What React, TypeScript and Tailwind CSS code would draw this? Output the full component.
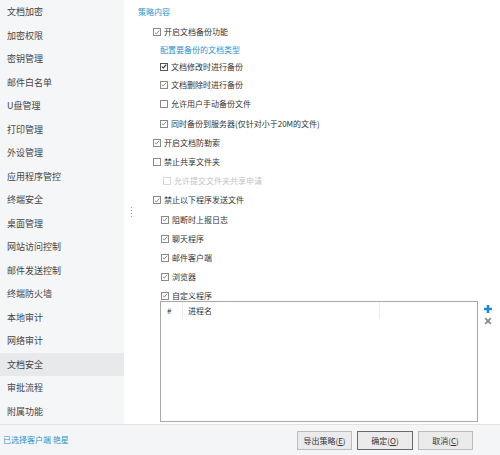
import React from "react";

const font = { fontFamily: '"Noto Sans CJK SC", "Noto Sans", sans-serif' };

const navItems = [
  "文档加密", "加密权限", "密钥管理", "邮件白名单", "U盘管理", "打印管理", "外设管理",
  "应用程序管控", "终端安全", "桌面管理", "网站访问控制", "邮件发送控制", "终端防火墙",
  "本地审计", "网络审计", "文档安全", "审批流程", "附属功能",
];

function Box({ checked, dark, disabled }: { checked?: boolean; dark?: boolean; disabled?: boolean }) {
  const border = disabled ? "border-[#d8d8d8]" : dark ? "border-[#555]" : "border-[#8a8a8a]";
  const stroke = dark ? "#333" : "#666";
  return (
    <span className={`inline-flex h-[8px] w-[8px] shrink-0 items-center justify-center border bg-white ${border}`}>
      {checked && (
        <svg width="7" height="7" viewBox="0 0 8 8">
          <path d="M1.2 4.2 L3.1 6 L6.9 1.6" fill="none" stroke={stroke} strokeWidth={dark ? 1.6 : 1} />
        </svg>
      )}
    </span>
  );
}

function Row({
  label, checked, dark, disabled, indent, h,
}: { label: string; checked?: boolean; dark?: boolean; disabled?: boolean; indent: string; h: string }) {
  return (
    <div className={`flex items-center ${h} ${indent}`}>
      <Box checked={checked} dark={dark} disabled={disabled} />
      <span className={`ml-[3px] text-[8px] leading-none ${disabled ? "text-[#c4c4c4]" : "text-[#333]"}`}>{label}</span>
    </div>
  );
}

export default function App() {
  return (
    <div className="flex h-[455px] w-[500px] flex-col overflow-hidden bg-white" style={font}>
      <div className="flex h-[424px]">
        <div className="flex w-[124px] flex-col bg-[#f5f6f8]">
          {navItems.map((n, i) => (
            <div
              key={n}
              className={`flex h-[23.5px] shrink-0 items-center pl-[7px] text-[9px] text-[#444] ${i === 15 ? "bg-[#e8e9eb]" : ""}`}
            >
              {n}
            </div>
          ))}
        </div>
        <div className="flex w-[12px] flex-col items-center justify-center">
          <div className="flex flex-col gap-[1.5px] pl-[3px]">
            {[0, 1, 2, 3].map((k) => (
              <span key={k} className="block h-[1.5px] w-[1.5px] bg-[#999]" />
            ))}
          </div>
        </div>
        <div className="relative flex flex-1 flex-col pt-[6px]">
          <div className="flex h-[12px] items-center pl-[2px] text-[8px] leading-none text-[#2b95d0]">策略内容</div>
          <div className="h-[8px]" />
          <Row label="开启文档备份功能" checked indent="pl-[17px]" h="h-[12px]" />
          <div className="h-[3px]" />
          <div className="flex h-[17px] items-center pl-[24px] text-[8px] leading-none text-[#2b95d0]">配置要备份的文档类型</div>
          <Row label="文档修改时进行备份" checked dark indent="pl-[24px]" h="h-[17px]" />
          <Row label="文档删除时进行备份" checked indent="pl-[24px]" h="h-[19px]" />
          <Row label="允许用户手动备份文件" indent="pl-[24px]" h="h-[20px]" />
          <Row label="同时备份到服务器(仅针对小于20M的文件)" checked indent="pl-[24px]" h="h-[19px]" />
          <Row label="开启文档防勒索" checked indent="pl-[17px]" h="h-[19px]" />
          <Row label="禁止共享文件夹" indent="pl-[17px]" h="h-[19px]" />
          <Row label="允许提交文件夹共享申请" disabled indent="pl-[27px]" h="h-[19px]" />
          <Row label="禁止以下程序发送文件" checked indent="pl-[17px]" h="h-[20px]" />
          <Row label="阻断时上报日志" checked indent="pl-[25px]" h="h-[19px]" />
          <Row label="聊天程序" checked indent="pl-[25px]" h="h-[19px]" />
          <Row label="邮件客户端" checked indent="pl-[25px]" h="h-[19px]" />
          <Row label="浏览器" checked indent="pl-[25px]" h="h-[19px]" />
          <Row label="自定义程序" checked indent="pl-[25px]" h="h-[19px]" />
          <div className="flex flex-1 pb-[1px] pl-[24px]">
            <div className="mt-[-4px] flex h-[121px] w-[318px] flex-col border border-[#a8a8a8] bg-white">
              <div className="flex h-[17px] items-center text-[8px] text-[#333]">
                <div className="flex h-full w-[22px] items-center border-r border-[#ececec] pl-[6px]">#</div>
                <div className="flex h-full w-[197px] items-center border-r border-[#ececec] pl-[5px]">进程名</div>
              </div>
            </div>
            <div className="ml-[5px] mt-[-1px] flex flex-col items-center gap-[3px]">
              <svg width="10" height="10" viewBox="0 0 10 10">
                <path d="M5 1 V9 M1 5 H9" stroke="#1f8ad6" strokeWidth="2.6" />
              </svg>
              <svg width="8" height="8" viewBox="0 0 8 8">
                <path d="M1.2 1.2 L6.8 6.8 M6.8 1.2 L1.2 6.8" stroke="#8a8a8a" strokeWidth="1.8" />
              </svg>
            </div>
          </div>
        </div>
      </div>
      <div className="flex flex-1 items-center border-t border-[#e2e2e2] bg-[#f4f5f6]">
        <div className="pl-[3px] text-[8px] text-[#2b95d0]">已选择客户端 艳星</div>
        <div className="ml-auto mr-[27px] flex gap-[5px] pt-[1px]">
          <button className="flex h-[19px] w-[55px] items-center justify-center border border-[#bcbcbc] bg-[#ebebeb] text-[8px] text-[#333]">导出策略(<span className="underline">E</span>)</button>
          <button className="flex h-[19px] w-[56px] items-center justify-center border border-[#6a6a6a] bg-[#ebebeb] text-[8px] text-[#333]">确定(<span className="underline">O</span>)</button>
          <button className="flex h-[19px] w-[55px] items-center justify-center border border-[#bcbcbc] bg-[#ebebeb] text-[8px] text-[#333]">取消(<span className="underline">C</span>)</button>
        </div>
      </div>
    </div>
  );
}
